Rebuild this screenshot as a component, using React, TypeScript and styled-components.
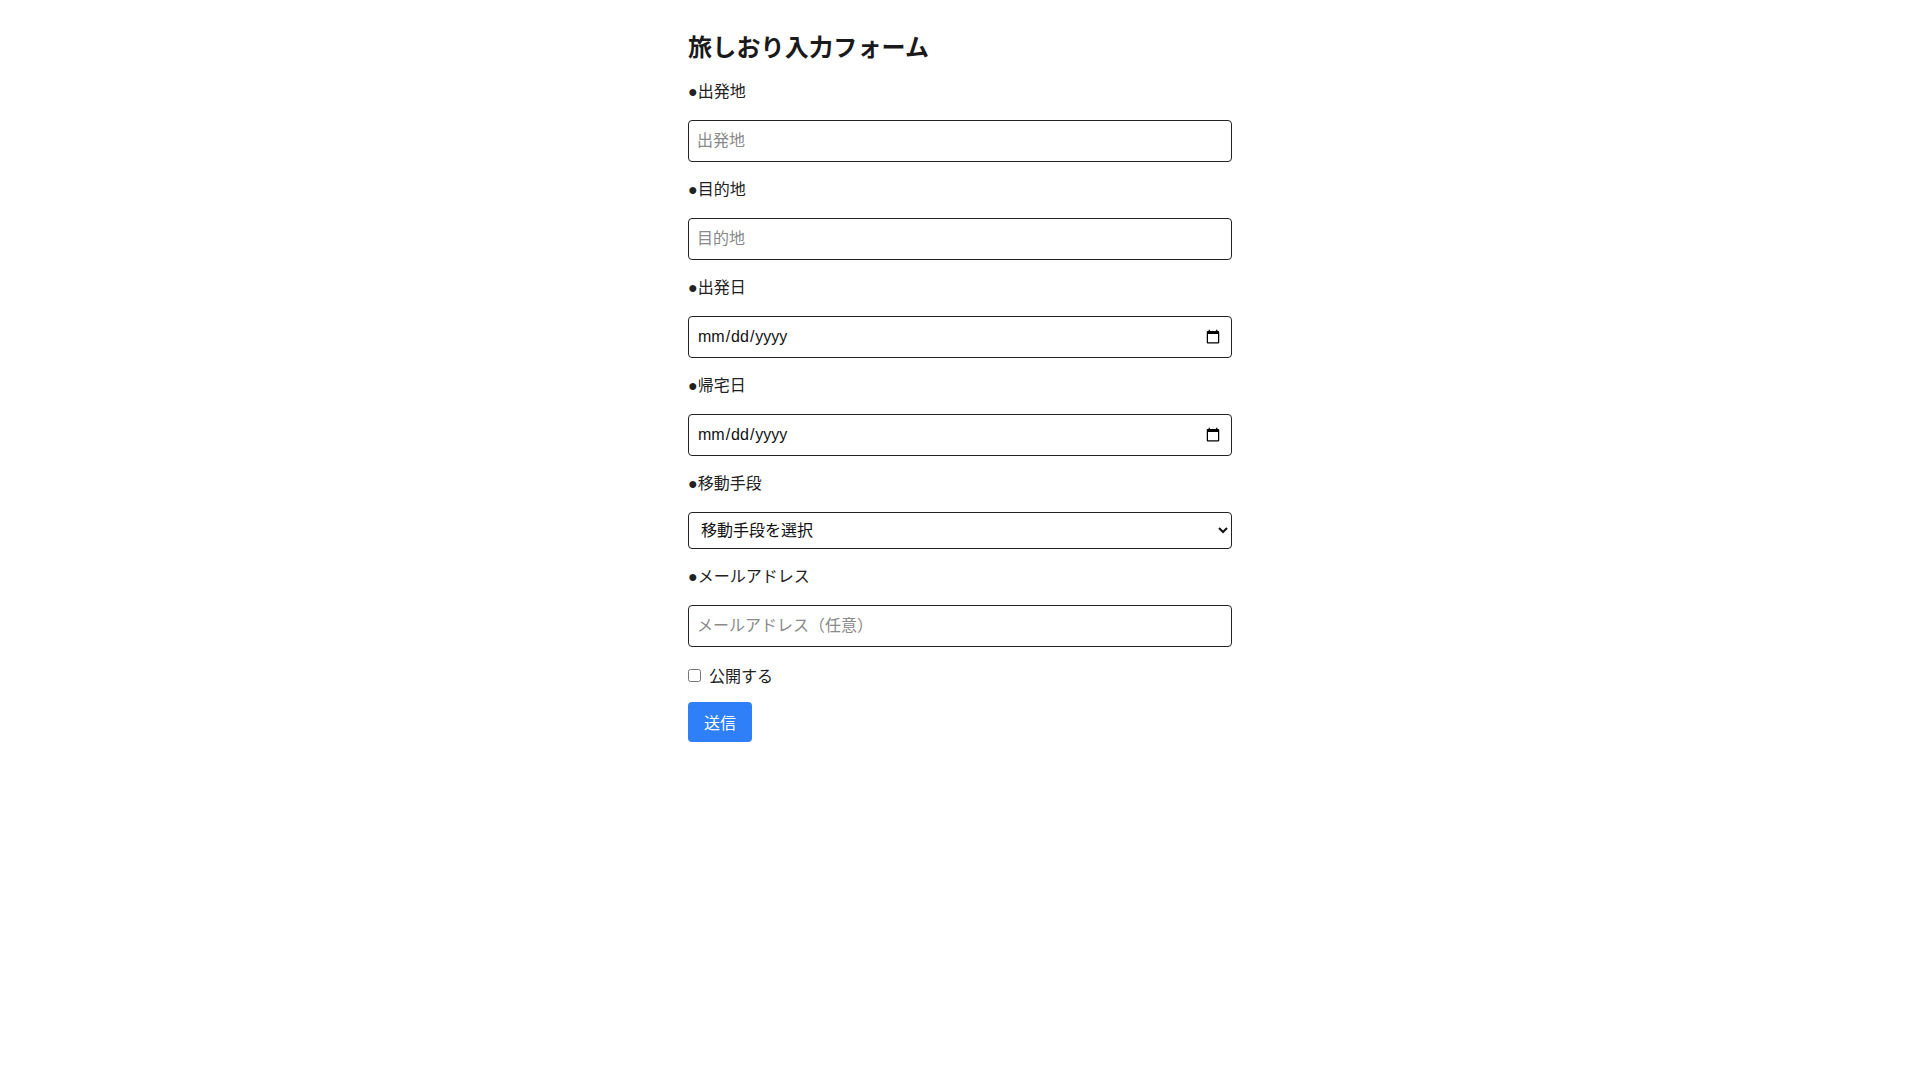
import styled, { createGlobalStyle } from 'styled-components';

const GlobalStyle = createGlobalStyle`
    body{
        margin: 0;
        background: #ffffff;
        font-family: "Liberation Sans", "Noto Sans CJK JP", sans-serif;
        color: #212121;
    }
`

const Page = styled.div`
    width: 544px;
    margin: 0 auto;
    padding-top: 31px;
`

const Title = styled.h1`
    font-size: 24px;
    font-weight: 700;
    line-height: 34px;
    letter-spacing: 0.2px;
    margin: 0 0 15px 0;
    color: #1a1a1a;
`

const Form = styled.form`
    display: flex;
    flex-direction: column;
`

const Label = styled.label`
    display: block;
    font-size: 16px;
    line-height: 24px;
    margin-bottom: 16px;
`

const TextInput = styled.input`
    box-sizing: border-box;
    width: 100%;
    height: 42px;
    margin: 0 0 16px 0;
    padding: 0 8px;
    border: 1px solid #222;
    border-radius: 4px;
    font-family: "Liberation Sans", "Noto Sans CJK JP", sans-serif;
    font-size: 16px;
    color: #111;
    background: #fff;

    &::placeholder{
        color: #8a8a8a;
    }

    &::-webkit-calendar-picker-indicator{
        margin-right: 0;
    }
`

const Select = styled.select`
    box-sizing: border-box;
    width: 100%;
    height: 37px;
    margin: 0 0 16px 0;
    padding: 0 8px;
    border: 1px solid #222;
    border-radius: 4px;
    font-family: "Liberation Sans", "Noto Sans CJK JP", sans-serif;
    font-size: 16px;
    color: #111;
    background: #fff;
`

const CheckRow = styled.label`
    display: flex;
    align-items: center;
    height: 24px;
    font-size: 16px;
    margin-bottom: 15px;

    input{
        width: 13px;
        height: 13px;
        margin: 0 8px 0 0;
    }
`

const SubmitButton = styled.button`
    align-self: flex-start;
    height: 40px;
    padding: 0 16px;
    border: none;
    border-radius: 4px;
    background: #2f80f8;
    color: #fff;
    font-family: "Liberation Sans", "Noto Sans CJK JP", sans-serif;
    font-size: 16px;
    cursor: pointer;
`

export default function App() {
    return (
        <>
            <GlobalStyle />
            <Page>
                <Title>旅しおり入力フォーム</Title>
                <Form onSubmit={(e) => e.preventDefault()}>
                    <Label htmlFor="from">●出発地</Label>
                    <TextInput id="from" type="text" placeholder="出発地" />

                    <Label htmlFor="to">●目的地</Label>
                    <TextInput id="to" type="text" placeholder="目的地" />

                    <Label htmlFor="start">●出発日</Label>
                    <TextInput id="start" type="date" />

                    <Label htmlFor="end">●帰宅日</Label>
                    <TextInput id="end" type="date" />

                    <Label htmlFor="transport">●移動手段</Label>
                    <Select id="transport" defaultValue="">
                        <option value="">移動手段を選択</option>
                        <option value="train">電車</option>
                        <option value="car">車</option>
                        <option value="plane">飛行機</option>
                        <option value="bus">バス</option>
                    </Select>

                    <Label htmlFor="mail">●メールアドレス</Label>
                    <TextInput id="mail" type="email" placeholder="メールアドレス（任意）" />

                    <CheckRow>
                        <input type="checkbox" />
                        公開する
                    </CheckRow>

                    <SubmitButton type="submit">送信</SubmitButton>
                </Form>
            </Page>
        </>
    )
}
